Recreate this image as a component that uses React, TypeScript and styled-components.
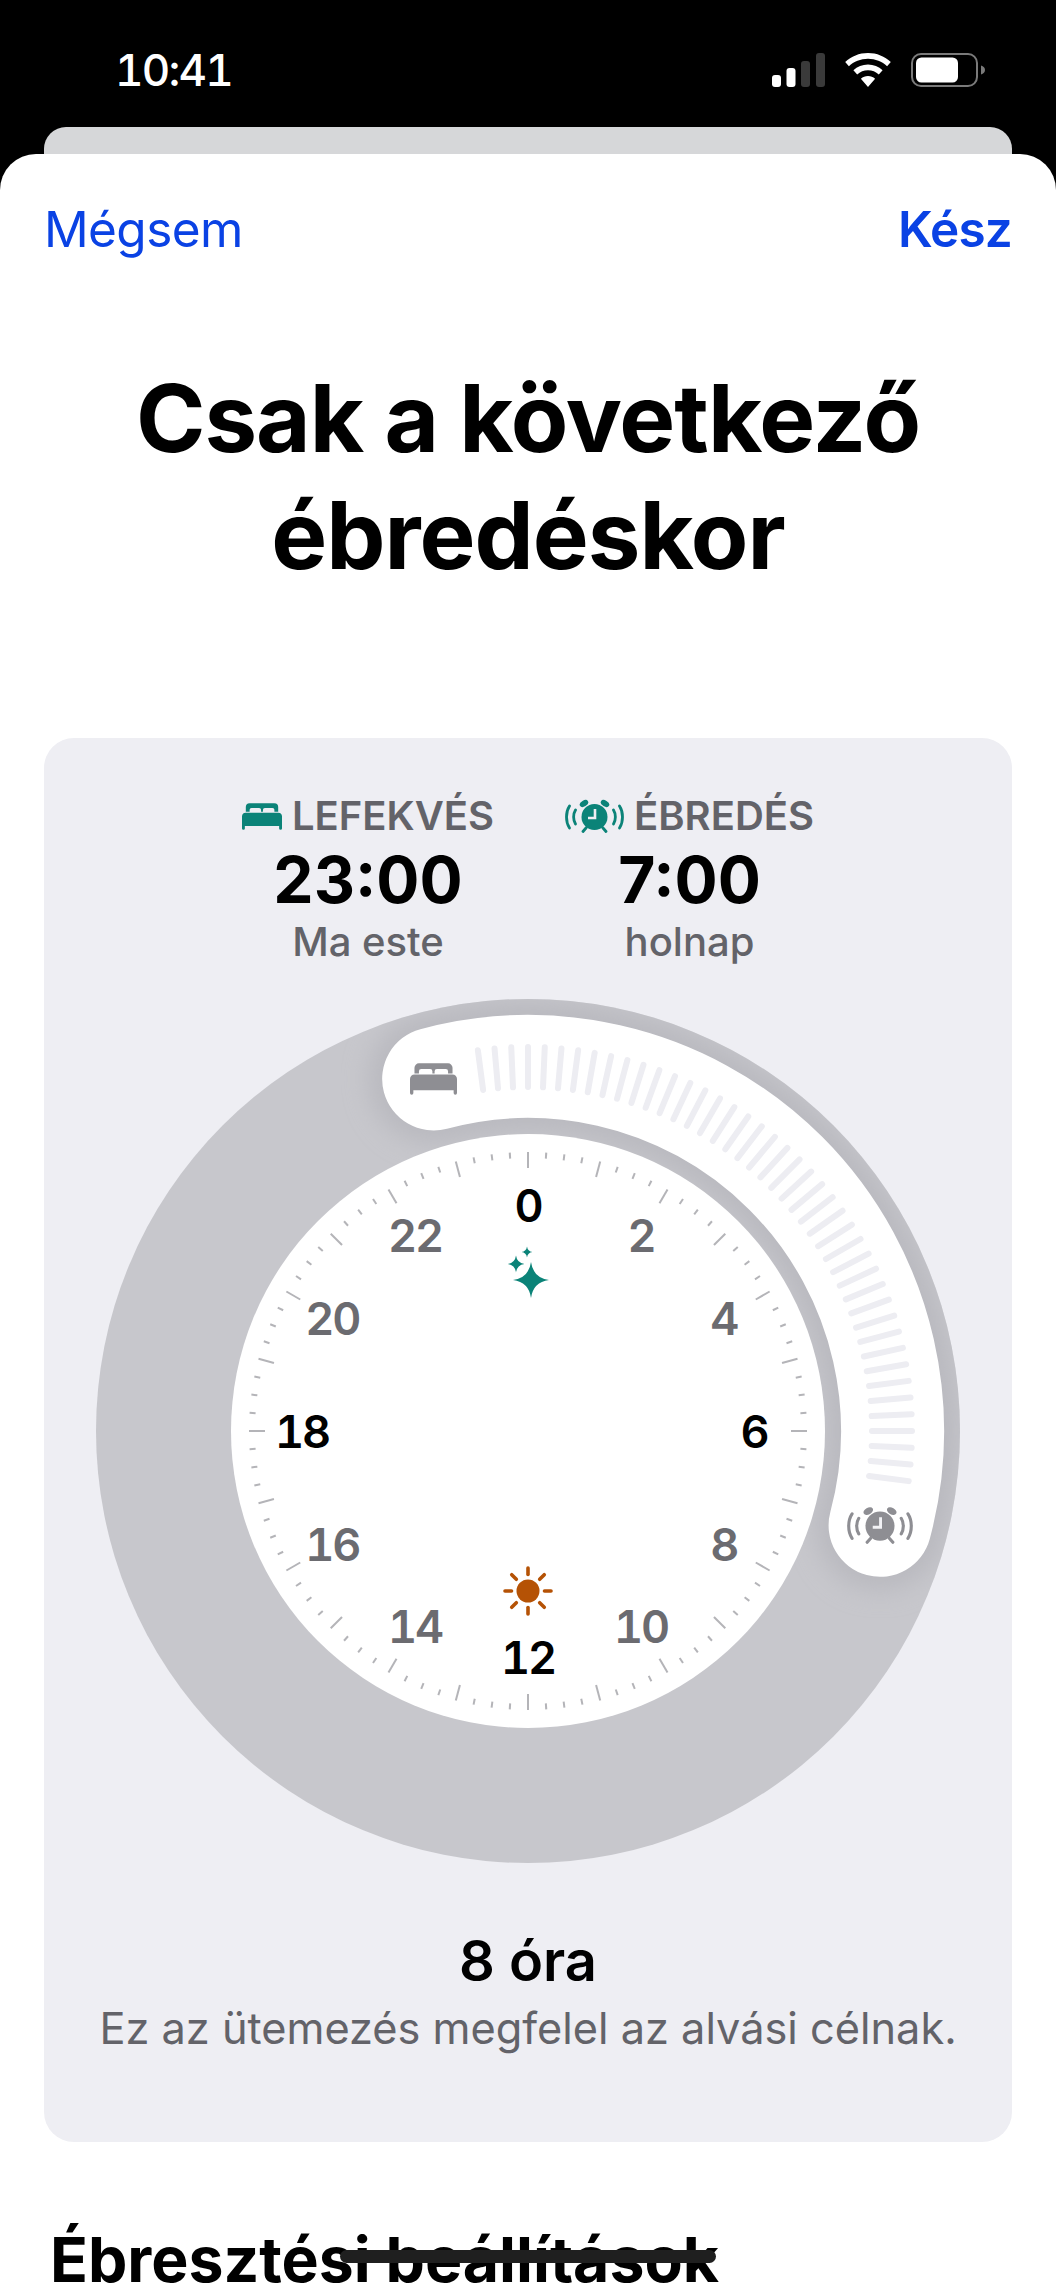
import React from 'react'
import styled, { createGlobalStyle } from 'styled-components'

const GlobalStyle = createGlobalStyle`
  html, body {
    margin: 0;
    padding: 0;
    background: #000;
  }
  * {
    box-sizing: border-box;
  }
`

const Page = styled.div`
  position: relative;
  width: 1056px;
  height: 2285px;
  overflow: hidden;
  background: #000;
  font-family: Inter, "Liberation Sans", sans-serif;
`

const StatusBar = styled.header`
  display: flex;
  justify-content: space-between;
  align-items: flex-start;
  height: 127px;
  padding: 47px 71px 0 115px;
`

const Clock = styled.span`
  color: #fff;
  font-size: 44px;
  line-height: 46px;
  font-weight: 500;
  font-variant-numeric: tabular-nums;
  letter-spacing: -1.8px;
`

const StatusIcons = styled.div`
  display: flex;
  align-items: center;
  gap: 20px;
  height: 46px;
`

const BackSheet = styled.div`
  height: 27px;
  margin: 0 44px;
  background: #d6d7d9;
  border-radius: 22px 22px 0 0;
`

const Sheet = styled.main`
  height: 2131px;
  padding: 0 44px;
  background: #fff;
  border-radius: 36px 36px 0 0;
`

const Nav = styled.nav`
  display: flex;
  justify-content: space-between;
  padding-top: 46px;
`

const NavButton = styled.span<{ $bold?: boolean }>`
  color: #0a42e4;
  font-size: 49.5px;
  line-height: 58px;
  font-weight: ${(p) => (p.$bold ? 600 : 400)};
  letter-spacing: ${(p) => (p.$bold ? '-0.8px' : '-0.6px')};
`

const Title = styled.h1`
  margin: 102px 0 0;
  color: #000;
  font-size: 94px;
  line-height: 117px;
  font-weight: 700;
  letter-spacing: -1px;
  text-align: center;
`

const Card = styled.section`
  height: 1404px;
  margin-top: 144px;
  padding-top: 55px;
  background: #eeeef3;
  border-radius: 30px;
`

const Times = styled.div`
  display: flex;
  justify-content: center;
  gap: 71px;
`

const TimeColumn = styled.div`
  display: flex;
  flex-direction: column;
  align-items: center;
`

const TimeLabel = styled.div`
  display: flex;
  align-items: center;
  gap: 10px;
  color: #636369;
  font-size: 40px;
  line-height: 46px;
  font-weight: 600;
`

const TimeValue = styled.div`
  margin-top: 5px;
  color: #000;
  font-size: 64px;
  line-height: 72px;
  font-weight: 700;
`

const TimeHint = styled.div`
  margin-top: 3px;
  color: #636369;
  font-size: 40px;
  line-height: 46px;
  font-weight: 500;
`

const DialWrap = styled.div`
  display: flex;
  justify-content: center;
  margin-top: 34px;
`

const DialSvg = styled.svg`
  display: block;
  width: 864px;
  height: 864px;
`

const DialNumber = styled.text<{ $major: boolean }>`
  fill: ${(p) => (p.$major ? '#000' : '#6b6b70')};
  font-size: 45px;
  font-weight: 600;
  font-variant-numeric: tabular-nums;
  letter-spacing: -2px;
  text-anchor: middle;
`

const Duration = styled.div`
  margin-top: 66px;
  color: #000;
  font-size: 56px;
  line-height: 64px;
  font-weight: 600;
  text-align: center;
`

const Verdict = styled.div`
  margin-top: 10px;
  color: #636369;
  font-size: 43.3px;
  line-height: 50px;
  font-weight: 400;
  text-align: center;
`

const SectionTitle = styled.h2`
  margin: 82px 0 0 6px;
  color: #000;
  font-size: 62.5px;
  line-height: 70px;
  font-weight: 700;
  white-space: nowrap;
`

const HomeIndicator = styled.div`
  position: absolute;
  left: 340px;
  top: 2250px;
  width: 376px;
  height: 13px;
  background: #1f1f1f;
  border-radius: 7px;
`

const TEAL = '#0b8378'
const CX = 432
const CY = 432

const polar = (r: number, deg: number) => {
  const a = (deg * Math.PI) / 180
  return { x: CX + r * Math.sin(a), y: CY - r * Math.cos(a) }
}

const arcPath = (r: number, from: number, to: number) => {
  const s = polar(r, from)
  const e = polar(r, to)
  return `M${s.x} ${s.y}A${r} ${r} 0 0 1 ${e.x} ${e.y}`
}

const star = (x: number, y: number, r: number) => {
  const a = r * 0.12
  return `M${x} ${y - r}Q${x + a} ${y - a} ${x + r} ${y}Q${x + a} ${y + a} ${x} ${y + r}Q${x - a} ${y + a} ${x - r} ${y}Q${x - a} ${y - a} ${x} ${y - r}Z`
}

const Bed = ({ color, x, y, w = 42, h = 28 }: { color: string; x?: number; y?: number; w?: number; h?: number }) => (
  <svg x={x} y={y} width={w} height={h} viewBox="0 0 42 28" style={{ display: 'block' }}>
    <path
      fill={color}
      d="M4 9V4a4 4 0 0 1 4-4h26a4 4 0 0 1 4 4v5h-4V7a2 2 0 0 0-2-2h-8a2 2 0 0 0-2 2v2h-2V7a2 2 0 0 0-2-2h-8a2 2 0 0 0-2 2v2z"
    />
    <path
      fill={color}
      d="M0 14a4 4 0 0 1 4-4h34a4 4 0 0 1 4 4v12.5a1.5 1.5 0 0 1-3 0V24H3v2.5a1.5 1.5 0 0 1-3 0z"
    />
  </svg>
)

const Alarm = ({ color, hands, x, y, w = 59, h = 34 }: { color: string; hands: string; x?: number; y?: number; w?: number; h?: number }) => (
  <svg x={x} y={y} width={w} height={h} viewBox="0 0 59 34" style={{ display: 'block' }}>
    <circle cx="29.5" cy="18" r="13" fill={color} />
    <path d="M30 10v9h-7" fill="none" stroke={hands} strokeWidth="2.6" />
    <ellipse cx="19" cy="4.5" rx="4.6" ry="3" fill={color} transform="rotate(-30 19 4.5)" />
    <ellipse cx="40" cy="4.5" rx="4.6" ry="3" fill={color} transform="rotate(30 40 4.5)" />
    <path
      d="M21 29l-3 3.5M38 29l3 3.5M4.5 7C.5 13 .5 23 4.5 29M10.5 11C8 15 8 21 10.5 25M54.5 7C58.5 13 58.5 23 54.5 29M48.5 11C51 15 51 21 48.5 25"
      fill="none"
      stroke={color}
      strokeWidth="2.8"
      strokeLinecap="round"
    />
  </svg>
)

const Signal = () => (
  <svg width="53" height="34" viewBox="0 0 53 34">
    <rect x="0" y="22" width="9" height="12" rx="3" fill="#fff" />
    <rect x="14.5" y="15" width="9" height="19" rx="3" fill="#fff" />
    <rect x="29" y="8" width="9" height="26" rx="3" fill="#3a3a3a" />
    <rect x="44" y="0" width="9" height="34" rx="3" fill="#3a3a3a" />
  </svg>
)

const Wifi = () => (
  <svg width="46" height="34" viewBox="0 0 46 34">
    <path
      fill="#fff"
      d="M23 0c8.8 0 16.8 3.400 22.800 9l-3.700 4.200C37.100 8.500 30.400 5.700 23 5.700S8.900 8.500 3.900 13.200L.2 9C6.200 3.400 14.200 0 23 0zm0 11.600c5.600 0 10.700 2.100 14.600 5.600l-3.800 4.200c-2.900-2.500-6.700-4.100-10.800-4.100s-7.900 1.600-10.800 4.100l-3.800-4.200c3.900-3.500 9-5.600 14.600-5.600zm0 11.500c2.700 0 5.200 1 7.100 2.700L23 34l-7.100-8.200c1.900-1.700 4.400-2.700 7.100-2.700z"
    />
  </svg>
)

const Battery = () => (
  <svg width="74" height="34" viewBox="0 0 74 34">
    <rect x="1" y="1" width="65" height="32" rx="9" fill="none" stroke="#7a7a7a" strokeWidth="2" />
    <rect x="5" y="4.500" width="42" height="25" rx="5.500" fill="#fff" />
    <path d="M70 12.500c2.500.8 4 2.400 4 4.500s-1.500 3.700-4 4.500z" fill="#7a7a7a" />
  </svg>
)

const ticks = Array.from({ length: 96 }, (_, i) => i)
const trackTicks = Array.from({ length: 43 }, (_, i) => -7.5 + i * 2.5)
const hours = Array.from({ length: 12 }, (_, i) => i * 2)

const Dial = () => {
  const sunRays = [0, 45, 90, 135, 180, 225, 270, 315]
  return (
    <DialSvg viewBox="0 0 864 864">
      <defs>
        <clipPath id="ring">
          <circle cx={CX} cy={CY} r="432" />
        </clipPath>
        <filter id="soft" x="-20%" y="-20%" width="140%" height="140%">
          <feGaussianBlur stdDeviation="12" />
        </filter>
      </defs>
      <circle cx={CX} cy={CY} r="432" fill="#c7c7cc" />
      <g clipPath="url(#ring)">
        <path
          d={arcPath(364.5, -15, 105)}
          fill="none"
          stroke="#b9b9bf"
          strokeWidth="130"
          strokeLinecap="round"
          filter="url(#soft)"
        />
      </g>
      <circle cx={CX} cy={CY} r="297" fill="#fff" />
      <path
        d={arcPath(364.5, -15, 105)}
        fill="none"
        stroke="#fff"
        strokeWidth="103"
        strokeLinecap="round"
      />

      {trackTicks.map((deg) => {
        const a = polar(344, deg)
        const b = polar(384, deg)
        return (
          <line key={deg} x1={a.x} y1={a.y} x2={b.x} y2={b.y} stroke="#ededf2" strokeWidth="6" strokeLinecap="round" />
        )
      })}
      <Bed color="#8e8e93" x={314} y={64} w={47} h={32} />
      <Alarm color="#8e8e93" hands="#f2f2f5" x={750.500} y={507} w={67} h={38} />

      {ticks.map((i) => {
        const deg = i * 3.75
        const a = polar(279, deg)
        const b = polar(i % 4 === 0 ? 263 : 273, deg)
        return (
          <line key={i} x1={a.x} y1={a.y} x2={b.x} y2={b.y} stroke="#b4b4b8" strokeWidth="2" />
        )
      })}

      {hours.map((h) => {
        const p = polar(226, h * 15)
        return (
          <DialNumber key={h} $major={h % 6 === 0} x={p.x} y={p.y + 16.500}>
            {h}
          </DialNumber>
        )
      })}

      <path d={`${star(435, 281, 18)}${star(420, 265, 8.500)}${star(431, 253, 5.500)}`} fill={TEAL} />

      <circle cx="432" cy="592" r="11.500" fill="#b55205" />
      <g stroke="#b55205" strokeWidth="3.600" strokeLinecap="round">
        {sunRays.map((deg) => {
          const a = (deg * Math.PI) / 180
          return (
            <line
              key={deg}
              x1={432 + 16.500 * Math.sin(a)}
              y1={592 - 16.500 * Math.cos(a)}
              x2={432 + 23 * Math.sin(a)}
              y2={592 - 23 * Math.cos(a)}
            />
          )
        })}
      </g>
    </DialSvg>
  )
}

const App: React.FC = () => {
  return (
    <Page>
      <GlobalStyle />
      <StatusBar>
        <Clock>10:41</Clock>
        <StatusIcons>
          <Signal />
          <Wifi />
          <Battery />
        </StatusIcons>
      </StatusBar>
      <BackSheet />
      <Sheet>
        <Nav>
          <NavButton>Mégsem</NavButton>
          <NavButton $bold>Kész</NavButton>
        </Nav>
        <Title>
          Csak a következő
          <br />
          ébredéskor
        </Title>
        <Card>
          <Times>
            <TimeColumn>
              <TimeLabel>
                <Bed color={TEAL} w={40} h={27} />
                LEFEKVÉS
              </TimeLabel>
              <TimeValue>23:00</TimeValue>
              <TimeHint>Ma este</TimeHint>
            </TimeColumn>
            <TimeColumn>
              <TimeLabel>
                <Alarm color={TEAL} hands="#eeeef3" />
                ÉBREDÉS
              </TimeLabel>
              <TimeValue>7:00</TimeValue>
              <TimeHint>holnap</TimeHint>
            </TimeColumn>
          </Times>
          <DialWrap>
            <Dial />
          </DialWrap>
          <Duration>8 óra</Duration>
          <Verdict>Ez az ütemezés megfelel az alvási célnak.</Verdict>
        </Card>
        <SectionTitle>Ébresztési beállítások</SectionTitle>
      </Sheet>
      <HomeIndicator />
    </Page>
  )
}

export default App
